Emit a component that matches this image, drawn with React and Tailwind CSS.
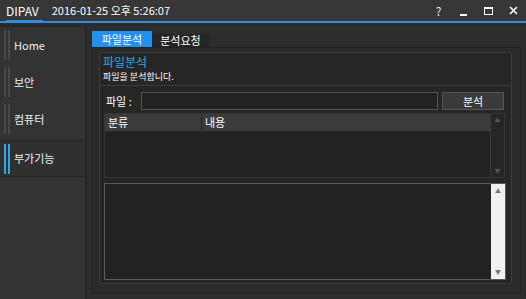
import React from 'react';

const font = { fontFamily: '"Noto Sans CJK KR", "Noto Sans", sans-serif' };

function NavItem({ label, active }) {
  return (
    <div
      className={`flex items-center h-[37px] border-b ${
        active ? 'bg-[#303030] border-[#252525] border-t mt-[2px]' : 'border-transparent'
      }`}
    >
      <div className="flex gap-[2px] ml-[4px] h-[30px]">
        <div className={`w-[2px] h-full ${active ? 'bg-[#2aa6ea]' : 'bg-[#484848]'}`}></div>
        <div className={`w-[2px] h-full ${active ? 'bg-[#2aa6ea]' : 'bg-[#484848]'}`}></div>
      </div>
      <span className="ml-[4px] text-[11px] text-[#f0f0f0]">{label}</span>
    </div>
  );
}

export default function App() {
  return (
    <div className="w-[526px] h-[299px] bg-[#2a2a2a] flex flex-col overflow-hidden select-none" style={font}>
      {/* Title bar */}
      <div className="h-[21px] bg-[#373737] flex items-center text-white shrink-0">
        <div className="relative h-full flex items-center px-[6px]">
          <span className="text-[12px] leading-none">DIPAV</span>
          <div className="absolute left-[6px] right-[2px] bottom-[-2px] h-[3px] bg-[#2a8fe0]"></div>
        </div>
        <span className="ml-[7px] text-[11px] leading-none">2016-01-25 오후 5:26:07</span>
        <div className="ml-auto flex items-center h-full text-[12px]">
          <span className="w-[25px] text-center text-[#f0e6da]">?</span>
          <span className="w-[25px] flex justify-center items-end h-full pb-[5px]">
            <span className="w-[7px] h-[2px] bg-white"></span>
          </span>
          <span className="w-[25px] flex justify-center">
            <span className="w-[9px] h-[8px] border border-white border-t-2"></span>
          </span>
          <span className="w-[25px] flex justify-center">
            <svg width="9" height="9" viewBox="0 0 9 9">
              <path d="M1 1L8 8M8 1L1 8" stroke="white" strokeWidth="1.6" />
            </svg>
          </span>
        </div>
      </div>
      <div className="h-[2px] bg-[#2a8fe0] shrink-0"></div>

      <div className="flex flex-1 min-h-0 pt-[3px]">
        {/* Sidebar */}
        <div className="w-[87px] bg-[#333333] border-t border-r-2 border-[#262626] shrink-0">
          <NavItem label="Home" />
          <NavItem label="보안" />
          <NavItem label="컴퓨터" />
          <NavItem label="부가기능" active />
        </div>

        {/* Main */}
        <div className="flex-1 flex flex-col pl-[5px] pr-[5px] pb-[5px] pt-[5px] bg-[#2d2d2d]">
          <div className="flex items-end h-[16px] shrink-0">
            <div className="w-[60px] h-[16px] bg-[#2390f0] text-white text-[11px] flex items-center justify-center">파일분석</div>
            <div className="w-[57px] h-[13px] bg-[#252525] text-white text-[11px] flex items-center justify-center">분석요청</div>
          </div>
          <div className="flex-1 bg-[#2b2b2b] border border-[#232323] pl-[6px] pr-[8px] pt-[4px] pb-[9px] flex">
            <div className="flex-1 border border-[#3c3c3c] rounded-[3px] bg-[#262626] flex flex-col">
              <div className="px-[3px] pt-[1px] h-[33px] border-b border-[#3a3a3a]">
                <div className="text-[12px] leading-[15px] text-[#2aa6ea]">파일분석</div>
                <div className="mt-[3px] text-[9px] leading-[10px] text-white">파일을 분석합니다.</div>
              </div>
              <div className="flex items-center mt-[6px] px-[4px] h-[18px]">
                <span className="w-[37px] pl-[2px] text-[11px] text-white">파일 :</span>
                <div className="w-[297px] h-[18px] bg-[#222222] border border-[#555555]"></div>
                <div className="ml-[4px] w-[62px] h-[18px] bg-[#3a3a3a] border border-[#575757] text-[11px] text-white flex items-center justify-center">분석</div>
              </div>
              <div className="ml-[4px] mr-[6px] mt-[3px] h-[65px] border border-[#353535] bg-[#222222] flex">
                <div className="flex-1">
                  <div className="h-[18px] bg-[#3b3b3b] border-b border-[#2a2a2a] flex text-[11px] text-white">
                    <div className="w-[97px] border-r border-[#2a2a2a] pl-[3px] flex items-center">분류</div>
                    <div className="pl-[3px] flex items-center">내용</div>
                  </div>
                </div>
                <div className="w-[14px] border-l border-[#3a3a3a] bg-[#262626] flex flex-col justify-between items-center py-[3px] text-[6px] text-[#555555] leading-none">
                  <span>▲</span>
                  <span>▼</span>
                </div>
              </div>
              <div className="ml-[4px] mr-[5px] mt-[5px] h-[97px] border border-[#5a5a5a] bg-[#222222] flex">
                <div className="flex-1"></div>
                <div className="w-[14px] bg-[#f0f0f0] flex flex-col justify-between items-center py-[4px] text-[6px] text-[#777777] leading-none">
                  <span>▲</span>
                  <span>▼</span>
                </div>
              </div>
            </div>
          </div>
        </div>
      </div>
    </div>
  );
}
